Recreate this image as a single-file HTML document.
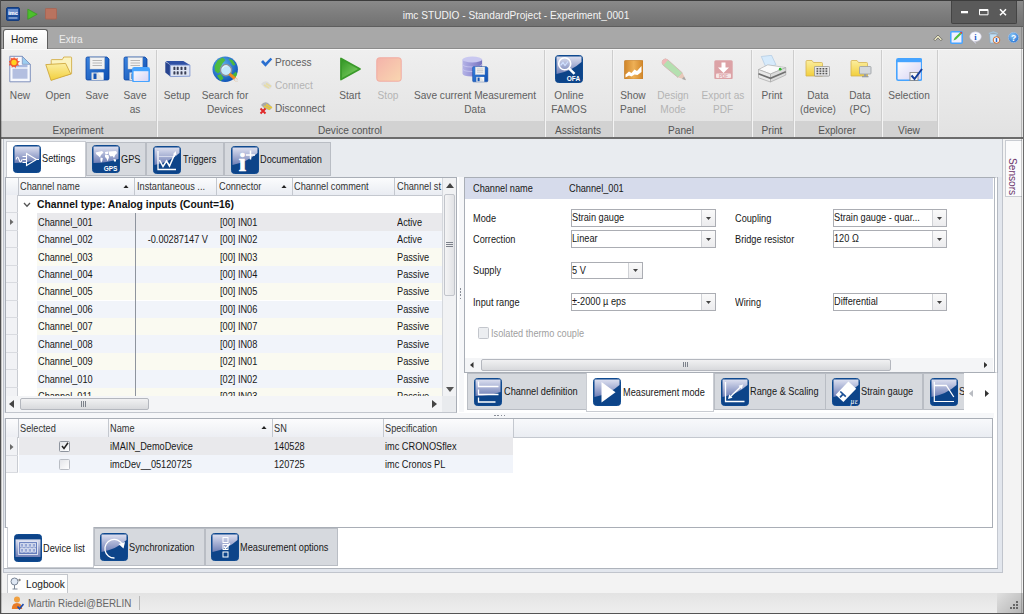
<!DOCTYPE html><html><head><meta charset="utf-8"><title>imc STUDIO - StandardProject - Experiment_0001</title><style>
html,body{margin:0;padding:0}
body{width:1024px;height:614px;overflow:hidden;position:relative;background:#f3f3f3;font-family:"Liberation Sans",sans-serif}
#w{position:absolute;left:0;top:0;width:1024px;height:614px;overflow:hidden}
#w div,#w svg{position:absolute;box-sizing:border-box}
.t{position:absolute;white-space:nowrap;line-height:20px;height:20px;color:#1a1a1a}
.g{font-size:10.4px;transform:scaleX(.885);color:#181818}
.gb{font-size:10.4px;font-weight:bold;transform:scaleX(.995);color:#111}
.r{font-size:11.5px;transform:scaleX(.88);color:#606060}
.rd{font-size:11.5px;transform:scaleX(.88);color:#b4b4b4}
.ti{font-size:11.5px;transform:scaleX(.88);color:#f4f4f4}
</style></head><body><div id="w">
<div style="left:0px;top:0px;width:1024px;height:27px;background:linear-gradient(#8b8b8b,#7d7d7d 50%,#717171)"></div>
<div style="left:0px;top:0px;width:1024px;height:1px;background:#3c3c3c"></div>
<div style="left:0px;top:26px;width:1024px;height:1px;background:#5e5e5e"></div>
<div style="left:0px;top:27px;width:1024px;height:22px;background:#a8a8a8"></div>
<div style="left:0px;top:48px;width:1024px;height:1px;background:#8c8c8c"></div>
<div style="left:950.5px;top:1px;width:66px;height:23px;background:#5a5a5a;border:1px solid #444;border-top:none;border-radius:0 0 2px 2px"></div>
<svg style="left:950px;top:0" width="66" height="24" viewBox="0 0 66 24"><rect x="11" y="11" width="7" height="2.300" fill="#fff"/><path d="M29.500 9.500h8.500v5.300h-8.500z" fill="none" stroke="#fff" stroke-width="1"/><rect x="29.500" y="9.200" width="8.500" height="1.800" fill="#fff"/><path d="M50 9.300l6 6M56 9.300l-6 6" stroke="#fff" stroke-width="1.500"/></svg>
<span class="t ti" style="top:4.5px;left:366px;width:300px;text-align:center;transform-origin:50% 50%;">imc STUDIO - StandardProject - Experiment_0001</span>
<div style="left:3px;top:29px;width:45px;height:21px;background:linear-gradient(#fff,#f1f1f1);border:1px solid #5e5e5e;border-bottom:none;border-radius:3px 3px 0 0"></div>
<span class="t r" style="top:29px;left:11px;transform-origin:0 50%;color:#222;">Home</span>
<span class="t r" style="top:29px;left:58.5px;transform-origin:0 50%;color:#ececec;">Extra</span>
<div style="left:0px;top:49px;width:1024px;height:89px;background:linear-gradient(#efefef,#e2e2e2);border-top:1px solid #fafafa"></div>
<div style="left:0px;top:121px;width:937px;height:17px;background:#d2d2d2"></div>
<div style="left:0px;top:137.4px;width:1024px;height:1.3px;background:#6c6c6c"></div>
<div style="left:0px;top:138.5px;width:1024px;height:1px;background:rgba(120,120,120,.25)"></div>
<div style="left:156px;top:50px;width:1px;height:87px;background:#cdcdcd"></div>
<div style="left:157px;top:50px;width:1px;height:87px;background:#f4f4f4"></div>
<div style="left:544px;top:50px;width:1px;height:87px;background:#cdcdcd"></div>
<div style="left:545px;top:50px;width:1px;height:87px;background:#f4f4f4"></div>
<div style="left:612px;top:50px;width:1px;height:87px;background:#cdcdcd"></div>
<div style="left:613px;top:50px;width:1px;height:87px;background:#f4f4f4"></div>
<div style="left:751px;top:50px;width:1px;height:87px;background:#cdcdcd"></div>
<div style="left:752px;top:50px;width:1px;height:87px;background:#f4f4f4"></div>
<div style="left:793px;top:50px;width:1px;height:87px;background:#cdcdcd"></div>
<div style="left:794px;top:50px;width:1px;height:87px;background:#f4f4f4"></div>
<div style="left:881px;top:50px;width:1px;height:87px;background:#cdcdcd"></div>
<div style="left:882px;top:50px;width:1px;height:87px;background:#f4f4f4"></div>
<div style="left:937px;top:50px;width:1px;height:87px;background:#cdcdcd"></div>
<div style="left:938px;top:50px;width:1px;height:87px;background:#f4f4f4"></div>
<span class="t r" style="top:119.5px;left:-72px;width:300px;text-align:center;transform-origin:50% 50%;color:#555;">Experiment</span>
<span class="t r" style="top:119.5px;left:200px;width:300px;text-align:center;transform-origin:50% 50%;color:#555;">Device control</span>
<span class="t r" style="top:119.5px;left:428px;width:300px;text-align:center;transform-origin:50% 50%;color:#555;">Assistants</span>
<span class="t r" style="top:119.5px;left:531px;width:300px;text-align:center;transform-origin:50% 50%;color:#555;">Panel</span>
<span class="t r" style="top:119.5px;left:622px;width:300px;text-align:center;transform-origin:50% 50%;color:#555;">Print</span>
<span class="t r" style="top:119.5px;left:687px;width:300px;text-align:center;transform-origin:50% 50%;color:#555;">Explorer</span>
<span class="t r" style="top:119.5px;left:759px;width:300px;text-align:center;transform-origin:50% 50%;color:#555;">View</span>
<span class="t r" style="top:85px;left:-130px;width:300px;text-align:center;transform-origin:50% 50%;">New</span>
<span class="t r" style="top:85px;left:-92px;width:300px;text-align:center;transform-origin:50% 50%;">Open</span>
<span class="t r" style="top:85px;left:-53.5px;width:300px;text-align:center;transform-origin:50% 50%;">Save</span>
<span class="t r" style="top:85px;left:-15px;width:300px;text-align:center;transform-origin:50% 50%;">Save</span>
<span class="t r" style="top:99px;left:-15px;width:300px;text-align:center;transform-origin:50% 50%;">as</span>
<span class="t r" style="top:85px;left:27px;width:300px;text-align:center;transform-origin:50% 50%;">Setup</span>
<span class="t r" style="top:85px;left:75px;width:300px;text-align:center;transform-origin:50% 50%;">Search for</span>
<span class="t r" style="top:99px;left:75px;width:300px;text-align:center;transform-origin:50% 50%;">Devices</span>
<span class="t r" style="top:85px;left:200px;width:300px;text-align:center;transform-origin:50% 50%;">Start</span>
<span class="t rd" style="top:85px;left:238px;width:300px;text-align:center;transform-origin:50% 50%;">Stop</span>
<span class="t r" style="top:85px;left:325px;width:300px;text-align:center;transform-origin:50% 50%;">Save current Measurement</span>
<span class="t r" style="top:99px;left:325px;width:300px;text-align:center;transform-origin:50% 50%;">Data</span>
<span class="t r" style="top:85px;left:418.5px;width:300px;text-align:center;transform-origin:50% 50%;">Online</span>
<span class="t r" style="top:99px;left:418.5px;width:300px;text-align:center;transform-origin:50% 50%;">FAMOS</span>
<span class="t r" style="top:85px;left:482.5px;width:300px;text-align:center;transform-origin:50% 50%;">Show</span>
<span class="t r" style="top:99px;left:482.5px;width:300px;text-align:center;transform-origin:50% 50%;">Panel</span>
<span class="t rd" style="top:85px;left:523px;width:300px;text-align:center;transform-origin:50% 50%;">Design</span>
<span class="t rd" style="top:99px;left:523px;width:300px;text-align:center;transform-origin:50% 50%;">Mode</span>
<span class="t rd" style="top:85px;left:572.5px;width:300px;text-align:center;transform-origin:50% 50%;">Export as</span>
<span class="t rd" style="top:99px;left:572.5px;width:300px;text-align:center;transform-origin:50% 50%;">PDF</span>
<span class="t r" style="top:85px;left:622px;width:300px;text-align:center;transform-origin:50% 50%;">Print</span>
<span class="t r" style="top:85px;left:667.5px;width:300px;text-align:center;transform-origin:50% 50%;">Data</span>
<span class="t r" style="top:99px;left:667.5px;width:300px;text-align:center;transform-origin:50% 50%;">(device)</span>
<span class="t r" style="top:85px;left:709.5px;width:300px;text-align:center;transform-origin:50% 50%;">Data</span>
<span class="t r" style="top:99px;left:709.5px;width:300px;text-align:center;transform-origin:50% 50%;">(PC)</span>
<span class="t r" style="top:85px;left:758.5px;width:300px;text-align:center;transform-origin:50% 50%;">Selection</span>
<span class="t r" style="top:52px;left:275px;transform-origin:0 50%;">Process</span>
<span class="t rd" style="top:75px;left:275px;transform-origin:0 50%;">Connect</span>
<span class="t r" style="top:97.5px;left:275px;transform-origin:0 50%;">Disconnect</span>
<div style="left:0px;top:139px;width:1024px;height:454px;background:#f3f3f3"></div>
<div style="left:2.5px;top:139px;width:1000.5px;height:434px;background:#e2e6ed;border:1px solid #c0c4cc;border-top:none"></div>
<div style="left:3.5px;top:139px;width:998.5px;height:37.5px;background:#e9ecf0"></div>
<div style="left:4.5px;top:176.5px;width:993px;height:392.5px;background:#fff;border-right:1px solid #c4c8d0;border-bottom:1px solid #c4c8d0"></div>
<div style="left:5.5px;top:141px;width:80px;height:36px;background:#fff;border:1px solid #c9ccd2;border-bottom:none"></div>
<div style="left:85.5px;top:142px;width:60px;height:34px;background:#d6d9de;border:1px solid #b9bdc4"></div>
<div style="left:146px;top:142px;width:77.5px;height:34px;background:#d6d9de;border:1px solid #b9bdc4"></div>
<div style="left:224px;top:142px;width:107px;height:34px;background:#d6d9de;border:1px solid #b9bdc4"></div>
<span class="t g" style="top:149.1px;left:42.2px;transform-origin:0 50%;">Settings</span>
<span class="t g" style="top:149.6px;left:121.2px;transform-origin:0 50%;">GPS</span>
<span class="t g" style="top:149.6px;left:182.7px;transform-origin:0 50%;">Triggers</span>
<span class="t g" style="top:149.6px;left:260.2px;transform-origin:0 50%;">Documentation</span>
<div style="left:5px;top:176.5px;width:452px;height:236px;background:#fff;border:1px solid #a9aeb6;border-bottom-color:#c2c6cd"></div>
<div style="left:6px;top:177.5px;width:437px;height:18.5px;background:linear-gradient(#fbfcfd,#e9ecf2);border-bottom:1px solid #c4c8cf"></div>
<div style="left:17.5px;top:178px;width:1px;height:17px;background:#c4c8cf"></div>
<div style="left:134px;top:178px;width:1px;height:17px;background:#c4c8cf"></div>
<div style="left:216px;top:178px;width:1px;height:17px;background:#c4c8cf"></div>
<div style="left:292px;top:178px;width:1px;height:17px;background:#c4c8cf"></div>
<div style="left:394px;top:178px;width:1px;height:17px;background:#c4c8cf"></div>
<span class="t g" style="top:177.1px;left:19.7px;transform-origin:0 50%;color:#333;">Channel name</span>
<span class="t g" style="top:177.1px;left:137.2px;transform-origin:0 50%;color:#333;">Instantaneous ...</span>
<span class="t g" style="top:177.1px;left:219.2px;transform-origin:0 50%;color:#333;">Connector</span>
<span class="t g" style="top:177.1px;left:294.2px;transform-origin:0 50%;color:#333;">Channel comment</span>
<span class="t g" style="top:177.1px;left:396.7px;transform-origin:0 50%;color:#333;">Channel st</span>
<svg style="left:123px;top:184.5px" width="6" height="3.500" viewBox="0 0 6 3.500"><path d="M0 3.500L3 0L6 3.500z" fill="#222"/></svg>
<svg style="left:281px;top:184.5px" width="6" height="3.500" viewBox="0 0 6 3.500"><path d="M0 3.500L3 0L6 3.500z" fill="#222"/></svg>
<div style="left:6px;top:195px;width:12px;height:201px;background:#f1f2f5;border-right:1px solid #c9ccd2"></div>
<svg style="left:23px;top:202px" width="8" height="6" viewBox="0 0 8 6"><path d="M1 1l3 3.200L7 1" fill="none" stroke="#555" stroke-width="1.300"/></svg>
<span class="t gb" style="top:195.1px;left:37.2px;transform-origin:0 50%;">Channel type: Analog inputs (Count=16)</span>
<div style="left:6px;top:195px;width:437px;height:201.500px;overflow:hidden">
<div style="left:30.5px;top:18.30000000000001px;width:406px;height:17.44px;background:#e9e9ec"></div>
<div style="left:0px;top:34.74000000000001px;width:12px;height:1px;background:#d9dbe0"></div>
<span class="t g" style="top:17.62px;left:32.2px;transform-origin:0 50%;">Channel_001</span>
<span class="t g" style="top:17.62px;left:214.2px;transform-origin:0 50%;">[00] IN01</span>
<span class="t g" style="top:17.62px;left:390.7px;transform-origin:0 50%;">Active</span>
<div style="left:30.5px;top:35.74000000000001px;width:406px;height:17.44px;background:#f1f4fa"></div>
<div style="left:0px;top:52.18000000000001px;width:12px;height:1px;background:#d9dbe0"></div>
<span class="t g" style="top:35.06px;left:32.2px;transform-origin:0 50%;">Channel_002</span>
<span class="t g" style="top:35.06px;left:-98.5px;width:300px;text-align:right;transform-origin:100% 50%;">-0.00287147 V</span>
<span class="t g" style="top:35.06px;left:214.2px;transform-origin:0 50%;">[00] IN02</span>
<span class="t g" style="top:35.06px;left:390.7px;transform-origin:0 50%;">Active</span>
<div style="left:30.5px;top:53.18000000000001px;width:406px;height:17.44px;background:#fafaf1"></div>
<div style="left:0px;top:69.62px;width:12px;height:1px;background:#d9dbe0"></div>
<span class="t g" style="top:52.5px;left:32.2px;transform-origin:0 50%;">Channel_003</span>
<span class="t g" style="top:52.5px;left:214.2px;transform-origin:0 50%;">[00] IN03</span>
<span class="t g" style="top:52.5px;left:390.7px;transform-origin:0 50%;">Passive</span>
<div style="left:30.5px;top:70.62px;width:406px;height:17.44px;background:#f1f4fa"></div>
<div style="left:0px;top:87.06px;width:12px;height:1px;background:#d9dbe0"></div>
<span class="t g" style="top:69.94px;left:32.2px;transform-origin:0 50%;">Channel_004</span>
<span class="t g" style="top:69.94px;left:214.2px;transform-origin:0 50%;">[00] IN04</span>
<span class="t g" style="top:69.94px;left:390.7px;transform-origin:0 50%;">Passive</span>
<div style="left:30.5px;top:88.06px;width:406px;height:17.44px;background:#fafaf1"></div>
<div style="left:0px;top:104.5px;width:12px;height:1px;background:#d9dbe0"></div>
<span class="t g" style="top:87.38px;left:32.2px;transform-origin:0 50%;">Channel_005</span>
<span class="t g" style="top:87.38px;left:214.2px;transform-origin:0 50%;">[00] IN05</span>
<span class="t g" style="top:87.38px;left:390.7px;transform-origin:0 50%;">Passive</span>
<div style="left:30.5px;top:105.5px;width:406px;height:17.44px;background:#f1f4fa"></div>
<div style="left:0px;top:121.94px;width:12px;height:1px;background:#d9dbe0"></div>
<span class="t g" style="top:104.82px;left:32.2px;transform-origin:0 50%;">Channel_006</span>
<span class="t g" style="top:104.82px;left:214.2px;transform-origin:0 50%;">[00] IN06</span>
<span class="t g" style="top:104.82px;left:390.7px;transform-origin:0 50%;">Passive</span>
<div style="left:30.5px;top:122.94000000000005px;width:406px;height:17.44px;background:#fafaf1"></div>
<div style="left:0px;top:139.38000000000005px;width:12px;height:1px;background:#d9dbe0"></div>
<span class="t g" style="top:122.26px;left:32.2px;transform-origin:0 50%;">Channel_007</span>
<span class="t g" style="top:122.26px;left:214.2px;transform-origin:0 50%;">[00] IN07</span>
<span class="t g" style="top:122.26px;left:390.7px;transform-origin:0 50%;">Passive</span>
<div style="left:30.5px;top:140.38px;width:406px;height:17.44px;background:#f1f4fa"></div>
<div style="left:0px;top:156.82px;width:12px;height:1px;background:#d9dbe0"></div>
<span class="t g" style="top:139.7px;left:32.2px;transform-origin:0 50%;">Channel_008</span>
<span class="t g" style="top:139.7px;left:214.2px;transform-origin:0 50%;">[00] IN08</span>
<span class="t g" style="top:139.7px;left:390.7px;transform-origin:0 50%;">Passive</span>
<div style="left:30.5px;top:157.82000000000005px;width:406px;height:17.44px;background:#fafaf1"></div>
<div style="left:0px;top:174.26000000000005px;width:12px;height:1px;background:#d9dbe0"></div>
<span class="t g" style="top:157.14px;left:32.2px;transform-origin:0 50%;">Channel_009</span>
<span class="t g" style="top:157.14px;left:214.2px;transform-origin:0 50%;">[02] IN01</span>
<span class="t g" style="top:157.14px;left:390.7px;transform-origin:0 50%;">Passive</span>
<div style="left:30.5px;top:175.26px;width:406px;height:17.44px;background:#f1f4fa"></div>
<div style="left:0px;top:191.7px;width:12px;height:1px;background:#d9dbe0"></div>
<span class="t g" style="top:174.58px;left:32.2px;transform-origin:0 50%;">Channel_010</span>
<span class="t g" style="top:174.58px;left:214.2px;transform-origin:0 50%;">[02] IN02</span>
<span class="t g" style="top:174.58px;left:390.7px;transform-origin:0 50%;">Passive</span>
<div style="left:30.5px;top:192.70000000000005px;width:406px;height:17.44px;background:#fafaf1"></div>
<div style="left:0px;top:209.14000000000004px;width:12px;height:1px;background:#d9dbe0"></div>
<span class="t g" style="top:192.02px;left:32.2px;transform-origin:0 50%;">Channel_011</span>
<span class="t g" style="top:192.02px;left:214.2px;transform-origin:0 50%;">[02] IN03</span>
<span class="t g" style="top:192.02px;left:390.7px;transform-origin:0 50%;">Passive</span>
<div style="left:0px;top:17px;width:12px;height:1px;background:#d9dbe0"></div>
</div>
<div style="left:134.5px;top:213px;width:1.5px;height:183px;background:#8e949e"></div>
<svg style="left:9.500px;top:219px" width="4" height="6" viewBox="0 0 4 6"><path d="M0 0L3.500 3L0 6z" fill="#6a6a6a"/></svg>
<div style="left:442px;top:177.5px;width:14px;height:218.5px;background:#f1f2f4;border-left:1px solid #d5d8dd"></div>
<div style="left:443.5px;top:193.5px;width:11.5px;height:102.5px;background:linear-gradient(90deg,#f4f4f5,#e2e3e6);border:1px solid #c2c5cb;border-radius:2px"></div>
<svg style="left:446px;top:183px" width="8" height="5" viewBox="0 0 8 5"><path d="M0 5L4 0L8 5z" fill="#444"/></svg>
<svg style="left:445.500px;top:387px" width="8" height="5" viewBox="0 0 8 5"><path d="M0 0L4 5L8 0z" fill="#555"/></svg>
<div style="left:446px;top:242px;width:7px;height:1px;background:#7d828b"></div>
<div style="left:446px;top:244px;width:7px;height:1px;background:#7d828b"></div>
<div style="left:446px;top:246px;width:7px;height:1px;background:#7d828b"></div>
<div style="left:6px;top:396px;width:450px;height:15.5px;background:#f4f5f7"></div>
<div style="left:19.5px;top:398px;width:129.5px;height:11.5px;background:linear-gradient(#f1f1f2,#d8d9dc);border:1px solid #b4b7be;border-radius:2px"></div>
<div style="left:81px;top:401px;width:1px;height:6px;background:#7d828b"></div>
<div style="left:83px;top:401px;width:1px;height:6px;background:#7d828b"></div>
<div style="left:85px;top:401px;width:1px;height:6px;background:#7d828b"></div>
<svg style="left:9px;top:400px" width="5" height="8" viewBox="0 0 5 8"><path d="M5 0L0 4L5 8z" fill="#444"/></svg>
<svg style="left:432px;top:400px" width="5" height="8" viewBox="0 0 5 8"><path d="M0 0L5 4L0 8z" fill="#444"/></svg>
<div style="left:442px;top:396px;width:14px;height:15.5px;background:#e9ebee"></div>
<div style="left:458.5px;top:177px;width:5px;height:235px;background:#f6f7f9"></div>
<div style="left:459.5px;top:288.0px;width:1.5px;height:1.5px;background:#8a8f98"></div>
<div style="left:459.5px;top:291.2px;width:1.5px;height:1.5px;background:#8a8f98"></div>
<div style="left:459.5px;top:294.4px;width:1.5px;height:1.5px;background:#8a8f98"></div>
<div style="left:459.5px;top:297.6px;width:1.5px;height:1.5px;background:#8a8f98"></div>
<div style="left:463.5px;top:176.5px;width:534px;height:196px;background:#fff;border:1px solid #a9aeb6;border-right:4px double #b4b9c1"></div>
<div style="left:464.5px;top:177.5px;width:528px;height:21px;background:#d6dbeb"></div>
<span class="t g" style="top:178.6px;left:473.2px;transform-origin:0 50%;">Channel name</span>
<span class="t g" style="top:178.6px;left:569.2px;transform-origin:0 50%;">Channel_001</span>
<span class="t g" style="top:208.6px;left:473.2px;transform-origin:0 50%;">Mode</span>
<span class="t g" style="top:229.6px;left:473.2px;transform-origin:0 50%;">Correction</span>
<span class="t g" style="top:261.1px;left:473.2px;transform-origin:0 50%;">Supply</span>
<span class="t g" style="top:292.6px;left:473.2px;transform-origin:0 50%;">Input range</span>
<span class="t g" style="top:208.6px;left:735.2px;transform-origin:0 50%;">Coupling</span>
<span class="t g" style="top:229.6px;left:735.2px;transform-origin:0 50%;">Bridge resistor</span>
<span class="t g" style="top:292.6px;left:735.2px;transform-origin:0 50%;">Wiring</span>
<div style="left:570.5px;top:209px;width:145px;height:17.5px;background:#fff;border:1px solid #abadb3"></div>
<div style="left:701.0px;top:210px;width:13.5px;height:15.5px;background:linear-gradient(#fafafa,#ececee);border-left:1px solid #d0d2d6"></div>
<svg style="left:705.5px;top:216.75px" width="5" height="3" viewBox="0 0 5 3"><path d="M0 0L2.500 3L5 0z" fill="#444"/></svg>
<span class="t g" style="top:208.35px;left:571.7px;transform-origin:0 50%;">Strain gauge</span>
<div style="left:570.5px;top:230px;width:145px;height:17.5px;background:#fff;border:1px solid #abadb3"></div>
<div style="left:701.0px;top:231px;width:13.5px;height:15.5px;background:linear-gradient(#fafafa,#ececee);border-left:1px solid #d0d2d6"></div>
<svg style="left:705.5px;top:237.75px" width="5" height="3" viewBox="0 0 5 3"><path d="M0 0L2.500 3L5 0z" fill="#444"/></svg>
<span class="t g" style="top:229.35px;left:571.7px;transform-origin:0 50%;">Linear</span>
<div style="left:570.5px;top:261.5px;width:72px;height:17.5px;background:#fff;border:1px solid #abadb3"></div>
<div style="left:628.0px;top:262.5px;width:13.5px;height:15.5px;background:linear-gradient(#fafafa,#ececee);border-left:1px solid #d0d2d6"></div>
<svg style="left:632.5px;top:269.25px" width="5" height="3" viewBox="0 0 5 3"><path d="M0 0L2.500 3L5 0z" fill="#444"/></svg>
<span class="t g" style="top:260.85px;left:571.7px;transform-origin:0 50%;">5 V</span>
<div style="left:570.5px;top:293px;width:145px;height:17.5px;background:#fff;border:1px solid #abadb3"></div>
<div style="left:701.0px;top:294px;width:13.5px;height:15.5px;background:linear-gradient(#fafafa,#ececee);border-left:1px solid #d0d2d6"></div>
<svg style="left:705.5px;top:300.75px" width="5" height="3" viewBox="0 0 5 3"><path d="M0 0L2.500 3L5 0z" fill="#444"/></svg>
<span class="t g" style="top:292.35px;left:571.7px;transform-origin:0 50%;">±-2000 µ eps</span>
<div style="left:832.5px;top:209px;width:114px;height:17.5px;background:#fff;border:1px solid #abadb3"></div>
<div style="left:932.0px;top:210px;width:13.5px;height:15.5px;background:linear-gradient(#fafafa,#ececee);border-left:1px solid #d0d2d6"></div>
<svg style="left:936.5px;top:216.75px" width="5" height="3" viewBox="0 0 5 3"><path d="M0 0L2.500 3L5 0z" fill="#444"/></svg>
<span class="t g" style="top:208.35px;left:833.7px;transform-origin:0 50%;">Strain gauge - quar...</span>
<div style="left:832.5px;top:230px;width:114px;height:17.5px;background:#fff;border:1px solid #abadb3"></div>
<div style="left:932.0px;top:231px;width:13.5px;height:15.5px;background:linear-gradient(#fafafa,#ececee);border-left:1px solid #d0d2d6"></div>
<svg style="left:936.5px;top:237.75px" width="5" height="3" viewBox="0 0 5 3"><path d="M0 0L2.500 3L5 0z" fill="#444"/></svg>
<span class="t g" style="top:229.35px;left:833.7px;transform-origin:0 50%;">120 Ω</span>
<div style="left:832.5px;top:293px;width:114px;height:17.5px;background:#fff;border:1px solid #abadb3"></div>
<div style="left:932.0px;top:294px;width:13.5px;height:15.5px;background:linear-gradient(#fafafa,#ececee);border-left:1px solid #d0d2d6"></div>
<svg style="left:936.5px;top:300.75px" width="5" height="3" viewBox="0 0 5 3"><path d="M0 0L2.500 3L5 0z" fill="#444"/></svg>
<span class="t g" style="top:292.35px;left:833.7px;transform-origin:0 50%;">Differential</span>
<div style="left:477.5px;top:327px;width:11.5px;height:11.5px;background:#eceef1;border:1px solid #c3c6cc;border-radius:1.500px"></div>
<span class="t g" style="top:323.6px;left:491.2px;transform-origin:0 50%;color:#a0a0a0;">Isolated thermo couple</span>
<div style="left:464.5px;top:358px;width:528px;height:13.5px;background:#f4f5f7"></div>
<div style="left:480.5px;top:359px;width:410px;height:11.5px;background:linear-gradient(#f1f1f2,#d8d9dc);border:1px solid #b4b7be;border-radius:2px"></div>
<div style="left:683px;top:362px;width:1px;height:5px;background:#7d828b"></div>
<div style="left:685px;top:362px;width:1px;height:5px;background:#7d828b"></div>
<div style="left:687px;top:362px;width:1px;height:5px;background:#7d828b"></div>
<svg style="left:470px;top:362px" width="3.500" height="6" viewBox="0 0 3.500 6"><path d="M3.500 0L0 3L3.500 6z" fill="#333"/></svg>
<svg style="left:983.500px;top:362px" width="3.500" height="6" viewBox="0 0 3.500 6"><path d="M0 0L3.500 3L0 6z" fill="#333"/></svg>
<div style="left:467px;top:372.5px;width:119.5px;height:37.5px;background:#d6d9de;border:1px solid #b9bdc4"></div>
<div style="left:586px;top:372.5px;width:127.5px;height:39px;background:#fff;border:1px solid #c9ccd2;border-top:none"></div>
<div style="left:713.5px;top:372.5px;width:112px;height:37.5px;background:#d6d9de;border:1px solid #b9bdc4"></div>
<div style="left:825px;top:372.5px;width:98px;height:37.5px;background:#d6d9de;border:1px solid #b9bdc4"></div>
<div style="left:922.5px;top:372.5px;width:41.5px;height:37.5px;background:#d6d9de;border:1px solid #b9bdc4;border-right:none"></div>
<span class="t g" style="top:381.6px;left:503.7px;transform-origin:0 50%;">Channel definition</span>
<span class="t g" style="top:382.6px;left:622.7px;transform-origin:0 50%;">Measurement mode</span>
<span class="t g" style="top:381.6px;left:749.7px;transform-origin:0 50%;">Range &amp; Scaling</span>
<span class="t g" style="top:381.6px;left:861.2px;transform-origin:0 50%;">Strain gauge</span>
<div style="left:959px;top:381px;width:5px;height:20px;overflow:hidden">
<span class="t g" style="top:0.6px;left:-0.3px;transform-origin:0 50%;">S</span>
</div>
<svg style="left:968.500px;top:390px" width="4" height="7" viewBox="0 0 4 7"><path d="M4 0L0 3.500L4 7z" fill="#b9bcc2"/></svg>
<svg style="left:984.500px;top:390px" width="4" height="7" viewBox="0 0 4 7"><path d="M0 0L4 3.500L0 7z" fill="#333"/></svg>
<div style="left:4px;top:412.5px;width:990px;height:5px;background:#f6f7f9"></div>
<div style="left:494.0px;top:414.5px;width:1.5px;height:1.5px;background:#8a8f98"></div>
<div style="left:497.3px;top:414.5px;width:1.5px;height:1.5px;background:#8a8f98"></div>
<div style="left:500.6px;top:414.5px;width:1.5px;height:1.5px;background:#8a8f98"></div>
<div style="left:503.9px;top:414.5px;width:1.5px;height:1.5px;background:#8a8f98"></div>
<div style="left:5px;top:417.5px;width:988px;height:110px;background:#fff;border:1px solid #a9aeb6"></div>
<div style="left:6px;top:418.5px;width:986px;height:19px;background:linear-gradient(#f8f9fb,#eaedf2);border-bottom:1px solid #c4c8cf"></div>
<div style="left:6px;top:418.5px;width:507px;height:19px;background:linear-gradient(#fcfcfd,#eceef3);border-bottom:1px solid #c4c8cf"></div>
<div style="left:18px;top:418.5px;width:1px;height:18px;background:#c4c8cf"></div>
<div style="left:108px;top:418.5px;width:1px;height:18px;background:#c4c8cf"></div>
<div style="left:272px;top:418.5px;width:1px;height:18px;background:#c4c8cf"></div>
<div style="left:383px;top:418.5px;width:1px;height:18px;background:#c4c8cf"></div>
<div style="left:513px;top:418.5px;width:1px;height:18px;background:#c4c8cf"></div>
<span class="t g" style="top:418.9px;left:20.2px;transform-origin:0 50%;color:#333;">Selected</span>
<span class="t g" style="top:418.9px;left:110.2px;transform-origin:0 50%;color:#333;">Name</span>
<span class="t g" style="top:418.9px;left:274.2px;transform-origin:0 50%;color:#333;">SN</span>
<span class="t g" style="top:418.9px;left:385.2px;transform-origin:0 50%;color:#333;">Specification</span>
<svg style="left:261px;top:425.5px" width="6" height="3.500" viewBox="0 0 6 3.500"><path d="M0 3.500L3 0L6 3.500z" fill="#222"/></svg>
<div style="left:6px;top:437px;width:12px;height:36px;background:#f1f2f5;border-right:1px solid #c9ccd2"></div>
<div style="left:6px;top:454.5px;width:12px;height:1px;background:#d9dbe0"></div>
<div style="left:6px;top:472px;width:12px;height:1px;background:#d9dbe0"></div>
<div style="left:19px;top:437px;width:494px;height:18px;background:#e9e9ec"></div>
<div style="left:19px;top:455px;width:494px;height:17.5px;background:#f1f4fa"></div>
<svg style="left:10px;top:443.500px" width="4" height="6" viewBox="0 0 4 6"><path d="M0 0L3.500 3L0 6z" fill="#6a6a6a"/></svg>
<div style="left:59px;top:440.5px;width:11px;height:11px;background:linear-gradient(135deg,#dfe2e6,#fff);border:1px solid #8e949e;border-radius:1.500px"></div>
<svg style="left:60.500px;top:442px" width="8" height="8" viewBox="0 0 8 8"><path d="M1 4l2 2.500L7 .8" fill="none" stroke="#222" stroke-width="1.500"/></svg>
<div style="left:59px;top:458.5px;width:11px;height:11px;background:linear-gradient(135deg,#e3e5e9,#fff);border:1px solid #b9bdc4;border-radius:1.500px"></div>
<span class="t g" style="top:437.1px;left:110.2px;transform-origin:0 50%;">iMAIN_DemoDevice</span>
<span class="t g" style="top:437.1px;left:274.2px;transform-origin:0 50%;">140528</span>
<span class="t g" style="top:437.1px;left:385.2px;transform-origin:0 50%;">imc CRONOSflex</span>
<span class="t g" style="top:454.6px;left:110.2px;transform-origin:0 50%;">imcDev__05120725</span>
<span class="t g" style="top:454.6px;left:274.2px;transform-origin:0 50%;">120725</span>
<span class="t g" style="top:454.6px;left:385.2px;transform-origin:0 50%;">imc Cronos PL</span>
<div style="left:4px;top:527.5px;width:993px;height:41px;background:#fff"></div>
<div style="left:6.5px;top:527px;width:87px;height:41px;background:#fff;border:1px solid #c9ccd2;border-top:none"></div>
<div style="left:93.5px;top:527.5px;width:111px;height:38.5px;background:#d6d9de;border:1px solid #b9bdc4"></div>
<div style="left:204.5px;top:527.5px;width:133px;height:38.5px;background:#d6d9de;border:1px solid #b9bdc4"></div>
<span class="t g" style="top:538.6px;left:43.2px;transform-origin:0 50%;">Device list</span>
<span class="t g" style="top:537.6px;left:129.2px;transform-origin:0 50%;">Synchronization</span>
<span class="t g" style="top:537.6px;left:240.2px;transform-origin:0 50%;">Measurement options</span>
<div style="left:4px;top:568px;width:994px;height:1px;background:#aeb3bb"></div>
<div style="left:1005px;top:140px;width:17px;height:56.5px;background:#fbfbfc;border:1px solid #c9ccd2;border-right:none"></div>
<span class="t g" style="left:1012.500px;top:141px;transform-origin:0 0;transform:rotate(90deg) translate(17px,-10px) scaleX(.92);color:#6b356b;font-size:11px">Sensors</span>
<div style="left:7px;top:574px;width:61px;height:19.5px;background:#fdfdfd;border:1px solid #c3c6cb;border-bottom:none"></div>
<span class="t r" style="top:574px;left:25.5px;transform-origin:0 50%;color:#222;">Logbook</span>
<div style="left:0px;top:592.5px;width:1024px;height:20px;background:linear-gradient(#e3e3e3,#eeeeee)"></div>
<span class="t r" style="top:593px;left:27.5px;transform-origin:0 50%;transform:scaleX(0.855);color:#666;">Martin Riedel@BERLIN</span>
<div style="left:139px;top:596px;width:1px;height:14px;background:#b8b8b8"></div>
<div style="left:997px;top:592.5px;width:25.5px;height:20px;background:linear-gradient(135deg,#e0e0e0,#b4b4b4)"></div>
<div style="left:1016px;top:607px;width:2px;height:2px;background:#666"></div>
<div style="left:1013px;top:607px;width:2px;height:2px;background:#666"></div>
<div style="left:1016px;top:604px;width:2px;height:2px;background:#666"></div>
<div style="left:1010px;top:607px;width:2px;height:2px;background:#666"></div>
<div style="left:1013px;top:604px;width:2px;height:2px;background:#666"></div>
<div style="left:1016px;top:601px;width:2px;height:2px;background:#666"></div>
<svg style="left:0;top:0" width="0" height="0"><defs>
<linearGradient id="gl" x1="0" y1="0" x2="0" y2="1"><stop offset="0" stop-color="#dde0f0"/><stop offset="1" stop-color="#6f7fb6"/></linearGradient>
<linearGradient id="fl" x1="0" y1="0" x2="1" y2="1"><stop offset="0" stop-color="#3b84e0"/><stop offset="1" stop-color="#0f4fb0"/></linearGradient>
<linearGradient id="fo" x1="0" y1="0" x2="0" y2="1"><stop offset="0" stop-color="#fbeea0"/><stop offset="1" stop-color="#f2cf3c"/></linearGradient>
<linearGradient id="gr" x1="0" y1="0" x2="1" y2="1"><stop offset="0" stop-color="#2f9422"/><stop offset="1" stop-color="#8ad86c"/></linearGradient>
<linearGradient id="st" x1="0" y1="0" x2="1" y2="1"><stop offset="0" stop-color="#f4b3aa"/><stop offset="1" stop-color="#f9d6b0"/></linearGradient>
<linearGradient id="wn" x1="0" y1="0" x2="1" y2="1"><stop offset="0" stop-color="#ffffff"/><stop offset="1" stop-color="#d6d2f4"/></linearGradient>
<radialGradient id="gb" cx=".4" cy=".35" r=".7"><stop offset="0" stop-color="#5fb4f0"/><stop offset="1" stop-color="#0a4fb4"/></radialGradient>
<linearGradient id="or" x1="0" y1="0" x2="1" y2="0"><stop offset="0" stop-color="#cf8428"/><stop offset=".5" stop-color="#eeb056"/><stop offset="1" stop-color="#cf8428"/></linearGradient>
<linearGradient id="cy" x1="0" y1="0" x2="1" y2="0"><stop offset="0" stop-color="#b4b3e6"/><stop offset=".5" stop-color="#9693d6"/><stop offset="1" stop-color="#7673bc"/></linearGradient>
<radialGradient id="hp" cx=".4" cy=".3" r=".8"><stop offset="0" stop-color="#8cc6f6"/><stop offset="1" stop-color="#1f6fd0"/></radialGradient>
</defs></svg>
<svg style="left:13px;top:145px" width="28" height="28" viewBox="0 0 28 28"><rect x=".500" y=".500" width="27" height="27" rx="3" fill="#0d4489" stroke="#0f4a90"/><path d="M1.500 1.500h25v12.500Q15 18 1.500 18z" fill="url(#gl)"/><path d="M3 14.500q1.500-5 3 0t3 0" stroke="#fff" fill="none" stroke-width="1.100"/><path d="M9.500 11.500h4M9.500 14.500h4M9.500 17.500h4" stroke="#fff" fill="none" stroke-width="1"/><path d="M13.500 8.500v12l10-6zM23.500 14.500h2.500" stroke="#fff" fill="none" stroke-width="1.100"/></svg>
<svg style="left:91.5px;top:145px" width="28" height="28" viewBox="0 0 28 28"><rect x=".500" y=".500" width="27" height="27" rx="3" fill="#0d4489" stroke="#0f4a90"/><path d="M1.500 1.500h25v12.500Q15 18 1.500 18z" fill="url(#gl)"/><path d="M3.500 7.500L10 6l1.500 1.500-2.500 2.500-1 2.500-1.500-1.500-2-1.500zM8.500 12.500l2.300.5-.5 3-1.300 1.800-.6-2.800zM13 7l3-.6v2.400l-2.500.9zM13 10h3.500l.5 2.500-1.500 3.700-1-2.700L13 12zM16.500 6.500L24 6l1.200 2-2 2-1.200 3-1.500-2-2 .5-1.500-2zM21.500 14l2.500.5v2h-2z" fill="#fff"/><text x="18.500" y="26" font-family="Liberation Sans,sans-serif" font-weight="bold" font-size="6.500" fill="#fff" text-anchor="middle">GPS</text></svg>
<svg style="left:153px;top:145.5px" width="28" height="28" viewBox="0 0 28 28"><rect x=".500" y=".500" width="27" height="27" rx="3" fill="#0d4489" stroke="#0f4a90"/><path d="M1.500 1.500h25v5.500Q17 16 1.500 19z" fill="url(#gl)"/><path d="M5 5v18.500h18" stroke="#fff" fill="none" stroke-width="1.300"/><path d="M5 10.500h17" stroke="#dfe3f2" stroke-width=".800" fill="none"/><path d="M6.500 14l3.500 6.500 3.500-5.500 3 5 5.500-12.500" stroke="#fff" fill="none" stroke-width="1.500"/><path d="M22.800 5l-2.800 3.200 3.400 1.300z" fill="#fff"/></svg>
<svg style="left:231px;top:145.5px" width="28" height="28" viewBox="0 0 28 28"><rect x=".500" y=".500" width="27" height="27" rx="3" fill="#0d4489" stroke="#0f4a90"/><path d="M1.500 1.500h25v5.500Q17 16 1.500 19z" fill="url(#gl)"/><text x="11.300" y="25" font-family="Liberation Serif,serif" font-weight="bold" font-size="26" fill="#fff" stroke="#fff" stroke-width=".700" text-anchor="middle">i</text><path d="M19.500 4.500v9M15 9h9" stroke="#fff" stroke-width="1.500"/></svg>
<svg style="left:14px;top:533.5px" width="28" height="28" viewBox="0 0 28 28"><rect x=".500" y=".500" width="27" height="27" rx="3" fill="#0d4489" stroke="#0f4a90"/><rect x="1.500" y="5.400" width="25" height="17.600" fill="url(#gl)"/><rect x="4.700" y="7.700" width="18.700" height="12.900" fill="#647cbc" stroke="#f4f5fb" stroke-width=".800"/><rect x="6.7" y="9.6" width="2.700" height="3.500" fill="#93a4d4" stroke="#f8f9fd" stroke-width=".700"/><rect x="10.7" y="9.6" width="2.700" height="3.500" fill="#93a4d4" stroke="#f8f9fd" stroke-width=".700"/><rect x="14.7" y="9.6" width="2.700" height="3.500" fill="#93a4d4" stroke="#f8f9fd" stroke-width=".700"/><rect x="18.7" y="9.6" width="2.700" height="3.500" fill="#93a4d4" stroke="#f8f9fd" stroke-width=".700"/><rect x="6.7" y="14.6" width="2.700" height="3.500" fill="#93a4d4" stroke="#f8f9fd" stroke-width=".700"/><rect x="10.7" y="14.6" width="2.700" height="3.500" fill="#93a4d4" stroke="#f8f9fd" stroke-width=".700"/><rect x="14.7" y="14.6" width="2.700" height="3.500" fill="#93a4d4" stroke="#f8f9fd" stroke-width=".700"/><rect x="18.7" y="14.6" width="2.700" height="3.500" fill="#93a4d4" stroke="#f8f9fd" stroke-width=".700"/></svg>
<svg style="left:100px;top:533px" width="28" height="28" viewBox="0 0 28 28"><rect x=".500" y=".500" width="27" height="27" rx="3" fill="#0d4489" stroke="#0f4a90"/><path d="M1.500 1.500h25v5.500Q17 16 1.500 19z" fill="url(#gl)"/><path d="M14.500 25A9.300 9.300 0 1 1 22.500 11.500" stroke="#fff" fill="none" stroke-width="1.300"/><path d="M18.500 11l6.500-2-1.500 6.500z" fill="#fff"/></svg>
<svg style="left:211px;top:533px" width="28" height="28" viewBox="0 0 28 28"><rect x=".500" y=".500" width="27" height="27" rx="3" fill="#0d4489" stroke="#0f4a90"/><path d="M1.500 1.500h25v5.500Q17 16 1.500 19z" fill="url(#gl)"/><rect x="12" y="4.500" width="5" height="5" stroke="#fff" fill="none" stroke-width="1"/><rect x="12" y="11.500" width="5" height="5" stroke="#fff" fill="none" stroke-width="1"/><rect x="12" y="19" width="5" height="5" stroke="#fff" fill="none" stroke-width="1"/><path d="M13 13.500l1.500 2 4.500-5" stroke="#fff" fill="none" stroke-width="1.300"/></svg>
<svg style="left:474px;top:377.5px" width="28" height="28" viewBox="0 0 28 28"><rect x=".500" y=".500" width="27" height="27" rx="3" fill="#0d4489" stroke="#0f4a90"/><path d="M1.500 1.500h25v12.500Q15 18 1.500 18z" fill="url(#gl)"/><path d="M4.500 3.500v5h20M4.500 11.500v5h20M4.500 19.500v4.500h17" stroke="#fff" fill="none" stroke-width="1.300"/></svg>
<svg style="left:593px;top:378px" width="28" height="28" viewBox="0 0 28 28"><rect x=".500" y=".500" width="27" height="27" rx="3" fill="#0d4489" stroke="#0f4a90"/><path d="M1.500 1.500h25v5.500Q17 16 1.500 19z" fill="url(#gl)"/><path d="M8.500 4v20.500l14-10.200z" fill="#fff"/></svg>
<svg style="left:720.5px;top:377.5px" width="28" height="28" viewBox="0 0 28 28"><rect x=".500" y=".500" width="27" height="27" rx="3" fill="#0d4489" stroke="#0f4a90"/><path d="M1.500 1.500h25v5.500Q17 16 1.500 19z" fill="url(#gl)"/><path d="M4.500 4v19.500h19" stroke="#fff" fill="none" stroke-width="1.300"/><path d="M9.500 18.500l10-9.500" stroke="#fff" fill="none" stroke-width="1.400"/><path d="M22 6.500l-4.500 1.200 3.300 3.300zM7 21l1.200-4.500 3.300 3.300z" fill="#fff"/></svg>
<svg style="left:832px;top:377.5px" width="28" height="28" viewBox="0 0 28 28"><rect x=".500" y=".500" width="27" height="27" rx="3" fill="#0d4489" stroke="#0f4a90"/><path d="M1.500 1.500h25v5.500Q17 16 1.500 19z" fill="url(#gl)"/><path d="M16.400 3.600L24.200 10.700 11.400 24.100 3.700 16.800z" fill="#fff"/><path d="M8.300 13.500l5.500 5.200M11 16.200l-3 3.200" stroke="#1a4f96" stroke-width="1.700" fill="none"/><text x="22" y="26" font-family="Liberation Serif,serif" font-style="italic" font-size="7.500" fill="#fff" text-anchor="middle">µε</text></svg>
<svg style="left:930px;top:377.5px" width="28" height="28" viewBox="0 0 28 28"><rect x=".500" y=".500" width="27" height="27" rx="3" fill="#0d4489" stroke="#0f4a90"/><path d="M1.500 1.500h25v5.500Q17 16 1.500 19z" fill="url(#gl)"/><path d="M4.300 3.800v19.700h19.700" stroke="#fff" fill="none" stroke-width="1.200"/><path d="M4.300 7.500h12l7.500 11.500" stroke="#fff" fill="none" stroke-width="1.300"/></svg>
<svg style="left:554.5px;top:54.5px" width="28" height="28" viewBox="0 0 28 28"><rect x=".500" y=".500" width="27" height="27" rx="3" fill="#0d4489" stroke="#0f4a90"/><path d="M1.500 1.500h25v5.500Q17 16 1.500 19z" fill="url(#gl)"/><circle cx="9.700" cy="8.800" r="6" stroke="#fff" fill="none" stroke-width="1.600"/><path d="M14 13.300l5.500 5.500" stroke="#fff" stroke-width="2.500"/><path d="M5.500 10.500l2.500-3 2 3 3-4" stroke="#cfe0ff" stroke-width="1.200" fill="none"/><text x="18.500" y="26" font-family="Liberation Sans,sans-serif" font-weight="bold" font-size="6.500" fill="#fff" text-anchor="middle">OFA</text></svg>
<svg style="left:6px;top:7px" width="14" height="14" viewBox="0 0 14 14"><rect x=".500" y=".500" width="13" height="13" rx="1.500" fill="#1d4f9c" stroke="#153c7c"/><rect x="2" y="2" width="10" height="6" fill="#6f92cc"/><text x="7" y="8" font-family="Liberation Sans,sans-serif" font-weight="bold" font-size="5.500" fill="#fff" text-anchor="middle">imc</text><path d="M2.500 11h9" stroke="#cfdcf2" stroke-width="1"/></svg>
<svg style="left:27px;top:7.5px" width="11" height="12.5" viewBox="0 0 11 12.5"><path d="M.800 1.200v10.100l9.400-5z" fill="#4cc02c" stroke="#3a9a22" stroke-width=".800" stroke-linejoin="round"/></svg>
<svg style="left:45px;top:8px" width="12" height="11.5" viewBox="0 0 12 11.5"><rect x=".400" y=".400" width="11.200" height="10.700" rx="1" fill="#b9735f" stroke="#a9624f" stroke-width=".800"/></svg>
<svg style="left:9px;top:55px" width="23" height="28" viewBox="0 0 23 28"><path d="M.800 1.300h12.500l8 8v17.500H.800z" fill="#f6f8fd" stroke="#7f91bd" stroke-width="1"/><path d="M13.300 1.300v8h8z" fill="#9ccdf0" stroke="#7f91bd" stroke-width=".800"/><rect x="3.500" y="10" width="15" height="2.300" fill="#a9b9e0"/><rect x="3.500" y="13.700" width="15" height="10" fill="#b3bfe0"/><path d="M5 1.500l1.200 2.800 2.800-1.500-.8 3 3 .8-2.700 1.500 1.700 2.700-3-.6L6.500 13.500 5 10.800 2.800 13l-.3-3.100L-.500 10.500l1.800-2.600L-1 6.200l3.100-.6L1.500 2.500l2.800 1.600z" fill="#f2502e" opacity=".9"/><circle cx="5" cy="7.500" r="4.400" fill="#f4562e" opacity=".85"/><circle cx="5" cy="7.500" r="2.700" fill="#ffd21e"/></svg>
<svg style="left:45px;top:55px" width="28" height="28" viewBox="0 0 28 28"><path d="M6.200 24.300V5.200q0-.6.600-.6h10.500l1.500-2.600h7q.8 0 .8.800V18.800z" fill="#fbf3c0" stroke="#d2ae4a" stroke-width=".900"/><path d="M.800 9.600L20.600 8.400 25.800 19 6 25.400z" fill="url(#fo)" stroke="#cfa83e" stroke-width=".900"/></svg>
<svg style="left:84.5px;top:56px" width="25" height="25" viewBox="0 0 25 25"><path d="M1 2.500Q1 1 2.500 1h19.500l2 2v19.500q0 1.500-1.500 1.500H2.500Q1 24 1 22.500z" fill="url(#fl)" stroke="#0b43a0" stroke-width=".800"/><rect x="5" y="1.500" width="14.500" height="11.500" fill="#f2f2f2" stroke="#c8c8c8" stroke-width=".500"/><path d="M7.500 4.500h9.500M7.500 7h9.500M7.500 9.500h9.500" stroke="#b8b8b8" stroke-width="1"/><rect x="6.500" y="16.500" width="12" height="7.500" fill="#e4e4e4"/><rect x="8.500" y="17.500" width="3" height="5.500" fill="#1554b4"/><path d="M13 16.500h5.500v7.500z" fill="#fff" opacity=".7"/></svg>
<svg style="left:122.5px;top:56px" width="25" height="25" viewBox="0 0 25 25"><path d="M1 2.500Q1 1 2.500 1h19.500l2 2v19.500q0 1.500-1.500 1.500H2.500Q1 24 1 22.500z" fill="url(#fl)" stroke="#0b43a0" stroke-width=".800"/><rect x="5" y="1.500" width="14.500" height="11.500" fill="#f2f2f2" stroke="#c8c8c8" stroke-width=".500"/><path d="M7.500 4.500h9.500M7.500 7h9.500M7.500 9.500h9.500" stroke="#b8b8b8" stroke-width="1"/><rect x="6.500" y="16.500" width="12" height="7.500" fill="#e4e4e4"/><rect x="8.500" y="17.500" width="3" height="5.500" fill="#1554b4"/><path d="M13 16.500h5.500v7.500z" fill="#fff" opacity=".7"/></svg>
<svg style="left:131.5px;top:66.5px" width="18" height="15.5" viewBox="0 0 18 15.5"><rect x=".800" y=".800" width="16.4" height="13.9" rx="1.500" fill="url(#wn)" stroke="#46a4ff" stroke-width="1.600"/><rect x="1" y="1" width="16" height="3.200" fill="#46a4ff"/></svg>
<svg style="left:164px;top:60px" width="28" height="18" viewBox="0 0 28 18"><path d="M1.700 1h17.700l6.500 4.100H6.300z" fill="#2f50a4"/><path d="M1.300 1.800l5 3.300v11.500l-5-4.100z" fill="#27448f"/><path d="M6.300 5.100h19.600v11.100l-19.600 .4z" fill="#dfe5f4" stroke="#7d94cf" stroke-width=".900"/><rect x="9.4" y="6.8" width="2" height="3.300" rx=".600" fill="#3a3f55"/><rect x="12.7" y="6.8" width="2" height="3.300" rx=".600" fill="#3a3f55"/><rect x="16.5" y="6.8" width="2" height="3.300" rx=".600" fill="#3a3f55"/><rect x="20.3" y="6.8" width="2" height="3.300" rx=".600" fill="#3a3f55"/><rect x="9.4" y="11.3" width="2" height="3.300" rx=".600" fill="#3a3f55"/><rect x="12.7" y="11.3" width="2" height="3.300" rx=".600" fill="#3a3f55"/><rect x="16.5" y="11.3" width="2" height="3.300" rx=".600" fill="#3a3f55"/><rect x="20.3" y="11.3" width="2" height="3.300" rx=".600" fill="#3a3f55"/></svg>
<svg style="left:212px;top:55.5px" width="28" height="28" viewBox="0 0 28 28"><circle cx="13.200" cy="13.300" r="12.700" fill="url(#gb)"/><path d="M2.500 10L5.500 4.500 10.500 1.500l3 2.500-3 3.500-2 4 1 3-3.500 3-3-2.500zM16.500 2.500l4.500 2 2.500 4.500-2.500 .5-2.500-3.500zM5 19.500l4-1.500 2.500 4.500-3 2.500zM20 19l4-3.500 1.200 3L22.500 23z" fill="#4fc02e" opacity=".9"/><circle cx="14" cy="14.100" r="5.600" fill="#c4e7fa" stroke="#8a929c" stroke-width="1.400"/><path d="M10.500 12.500a3.800 3.800 0 0 1 5-2.500" stroke="#fff" stroke-width="1" fill="none" opacity=".8"/><path d="M18.300 18.700l6.200 5.500" stroke="#ef8a22" stroke-width="3" stroke-linecap="round"/><path d="M23.800 23.600l.9 .8" stroke="#e4e4e4" stroke-width="3" stroke-linecap="round"/></svg>
<svg style="left:260px;top:57px" width="13" height="10.5" viewBox="0 0 13 10.5"><path d="M1 5l2-2 2.500 2.800L10.500 .8l1.800 1.500-6.800 7.500z" fill="#2a6fd0"/></svg>
<svg style="left:259px;top:79px" width="15" height="12" viewBox="0 0 15 12"><path d="M2 5q3-4 7-2l4 4-2 3-5-1z" fill="#d9d9d9" opacity=".8"/><path d="M5 6l5 3M7 4.500l5 3" stroke="#e8dca0" stroke-width="1.600" opacity=".9"/></svg>
<svg style="left:259px;top:100px" width="15" height="15" viewBox="0 0 15 15"><path d="M2 5q3-4 7-2l4 4-2 3-5-1z" fill="#a8a8a8"/><path d="M5 6l6 3.500M7 4.500l6 3.500" stroke="#e8c83c" stroke-width="1.800"/><path d="M1.500 8.500l5 5M6.500 8.500l-5 5" stroke="#e02828" stroke-width="1.900"/></svg>
<svg style="left:338.5px;top:56px" width="23" height="26" viewBox="0 0 23 26"><path d="M2 2.500v21l19-10.500z" fill="url(#gr)" stroke="#3a9a2a" stroke-width="1.800" stroke-linejoin="round"/></svg>
<svg style="left:375.5px;top:56.5px" width="26" height="25" viewBox="0 0 26 25"><rect x=".800" y=".800" width="24.400" height="23.400" rx="2.500" fill="url(#st)" stroke="#f1aaa2" stroke-width="1"/></svg>
<svg style="left:461.5px;top:55.5px" width="28" height="28" viewBox="0 0 28 28"><path d="M.500 3.500v14q0 3 9.800 3t9.800-3v-14z" fill="url(#cy)"/><ellipse cx="10.300" cy="3.500" rx="9.800" ry="3" fill="#c9c8f0"/><path d="M.500 8q0 3 9.800 3t9.800-3M.500 12.500q0 3 9.800 3t9.800-3" stroke="#c9c8f0" stroke-width=".800" fill="none"/></svg>
<svg style="left:472px;top:66px" width="16.5" height="16.5" viewBox="0 0 25 25"><path d="M1 2.500Q1 1 2.500 1h19.500l2 2v19.500q0 1.500-1.500 1.500H2.500Q1 24 1 22.500z" fill="url(#fl)" stroke="#0b43a0" stroke-width=".800"/><rect x="5" y="1.500" width="14.500" height="11.500" fill="#f2f2f2" stroke="#c8c8c8" stroke-width=".500"/><path d="M7.500 4.500h9.500M7.500 7h9.500M7.500 9.500h9.500" stroke="#b8b8b8" stroke-width="1"/><rect x="6.500" y="16.500" width="12" height="7.500" fill="#e4e4e4"/><rect x="8.500" y="17.500" width="3" height="5.500" fill="#1554b4"/><path d="M13 16.500h5.500v7.500z" fill="#fff" opacity=".7"/></svg>
<svg style="left:623.5px;top:59.5px" width="19.5" height="19.5" viewBox="0 0 19.5 19.5"><rect x=".300" y=".300" width="18.900" height="18.900" rx="1.500" fill="url(#or)" stroke="#c27a24" stroke-width=".600"/><path d="M1.500 14.500l3.500-3 2.500 1.500 3-3.500 2.500 1.500 4.500-5v6l-4 3-3-.5-3 2-2.500-1-3.500 2z" fill="#fff"/></svg>
<svg style="left:659.5px;top:57px" width="28" height="25" viewBox="0 0 28 25"><path d="M2.500 3.500q2.500-3 5.500-.5L22.500 16l-4.500 4.500L3.500 8.500q-2.500-2.500-1-5z" fill="#b4e0b0" stroke="#d0b0b0" stroke-width=".800"/><path d="M22.500 16l3.500 7-7.500-2.500z" fill="#e8c8b8"/><path d="M24 19.500l2 3.800-4-1.300z" fill="#a8a8a8"/><path d="M2.500 3.500q2.500-3 5.500-.5l-4.500 5q-2.500-2.500-1-4.500z" fill="#f0b8b8"/></svg>
<svg style="left:714px;top:59.5px" width="19" height="19.5" viewBox="0 0 19 19.5"><rect x=".300" y=".300" width="18.400" height="18.900" rx="1.500" fill="#dca2a6"/><path d="M7.500 2.500h4v5h3.500l-5.500 5.500L4 7.500h3.500z" fill="#fff"/><rect x="2" y="13.500" width="15" height="4.500" rx="1" fill="#f6e6e6"/><text x="9.500" y="17.500" font-family="Liberation Sans,sans-serif" font-weight="bold" font-size="4.500" fill="#dca2a6" text-anchor="middle">PDF</text></svg>
<svg style="left:758px;top:55px" width="29" height="28" viewBox="0 0 29 28"><path d="M8 12.600L3.300 1.500 13.500 .300 18 9.800z" fill="#d6eafb" stroke="#a6c2de" stroke-width=".600"/><path d="M.500 14.500L9.800 9.800l18 2.800L12.500 19z" fill="#fafafa" stroke="#b0b0b0" stroke-width=".700"/><path d="M.500 14.500l12 4.500v8L.500 22.800z" fill="#e9e9e9" stroke="#a8a8a8" stroke-width=".700"/><path d="M12.500 19l15.300-6.400V20L12.500 27z" fill="#dcdcdc" stroke="#a8a8a8" stroke-width=".700"/><path d="M.500 18.800l12 4.500 15.300-6.500" stroke="#707070" stroke-width="1.600" fill="none"/><circle cx="22.200" cy="14.200" r="1.400" fill="#30b430"/></svg>
<svg style="left:805px;top:59px" width="18" height="18" viewBox="0 0 18 18"><path d="M1 17V2.500q0-1 1-1h5l1.500 2h8q1 0 1 1V17z" fill="url(#fo)" stroke="#d4b250" stroke-width=".800"/></svg>
<svg style="left:813.5px;top:66px" width="16" height="10.5" viewBox="0 0 16 10.5"><rect x=".400" y=".400" width="15.200" height="9.700" rx="1" fill="#e8e8e8" stroke="#8e8e8e" stroke-width=".800"/><rect x="2.5" y="2.0" width="1.800" height="1.500" fill="#555"/><rect x="5.5" y="2.0" width="1.800" height="1.500" fill="#555"/><rect x="8.5" y="2.0" width="1.800" height="1.500" fill="#555"/><rect x="11.5" y="2.0" width="1.800" height="1.500" fill="#555"/><rect x="2.5" y="4.4" width="1.800" height="1.500" fill="#555"/><rect x="5.5" y="4.4" width="1.800" height="1.500" fill="#555"/><rect x="8.5" y="4.4" width="1.800" height="1.500" fill="#555"/><rect x="11.5" y="4.4" width="1.800" height="1.500" fill="#555"/><rect x="2.5" y="6.8" width="1.800" height="1.500" fill="#555"/><rect x="5.5" y="6.8" width="1.800" height="1.500" fill="#555"/><rect x="8.5" y="6.8" width="1.800" height="1.500" fill="#555"/><rect x="11.5" y="6.8" width="1.800" height="1.500" fill="#555"/></svg>
<svg style="left:849.5px;top:59px" width="18" height="18" viewBox="0 0 18 18"><path d="M1 17V2.500q0-1 1-1h5l1.500 2h8q1 0 1 1V17z" fill="url(#fo)" stroke="#d4b250" stroke-width=".800"/></svg>
<svg style="left:858.5px;top:65.5px" width="13" height="12" viewBox="0 0 13 12"><rect x=".500" y=".500" width="11.500" height="7.500" rx=".800" fill="#d4d8dc" stroke="#9a9ea2" stroke-width=".800"/><rect x="5" y="8" width="2.500" height="2" fill="#9a9ea2"/><rect x="3" y="10" width="6.500" height="1.300" fill="#9a9ea2"/></svg>
<svg style="left:895.5px;top:57.5px" width="26.5" height="23" viewBox="0 0 26.5 23"><rect x=".800" y=".800" width="24.9" height="21.4" rx="1.500" fill="url(#wn)" stroke="#46a4ff" stroke-width="1.600"/><rect x="1" y="1" width="24.5" height="3.200" fill="#46a4ff"/></svg>
<svg style="left:908.5px;top:68px" width="14" height="14" viewBox="0 0 14 14"><rect x="1" y="4.500" width="8" height="8" fill="#f8f8f8" stroke="#888" stroke-width=".900"/><path d="M2.500 7.500l3 3.500L13 1" fill="none" stroke="#123c98" stroke-width="2"/></svg>
<svg style="left:932.5px;top:33.5px" width="10" height="7" viewBox="0 0 10 7"><path d="M.800 5.500L5 1l4.200 4.500-1.500 1.200L5 3.800 2.300 6.700z" fill="#f4f0c8" stroke="#555" stroke-width=".700"/></svg>
<svg style="left:949.5px;top:31px" width="13" height="13" viewBox="0 0 13 13"><rect x=".800" y=".800" width="11.400" height="11.400" rx="1" fill="#f0f0ff" stroke="#46a4ff" stroke-width="1.500"/><path d="M3.500 9.500l1-2.500 5.500-5.500 1.500 1.500L6 8.500z" fill="#4ec03c"/><path d="M10 1.500l1-1 1.500 1.500-1 1z" fill="#e03030"/></svg>
<svg style="left:968.5px;top:31px" width="13" height="13" viewBox="0 0 13 13"><path d="M6.500 .8a5.700 4.800 0 1 1-1 9.500l1.500 2.200-3.500-2.800A5.700 4.800 0 0 1 6.500 .8z" fill="#fafaff" stroke="#c8c8dc" stroke-width=".600"/><text x="6.500" y="8.800" font-family="Liberation Serif,serif" font-weight="bold" font-size="8.500" fill="#1c5cc8" text-anchor="middle">i</text></svg>
<svg style="left:987.5px;top:31px" width="13" height="13" viewBox="0 0 13 13"><path d="M1.500 3h7.500l-.8 9h-6z" fill="#c4e0f4" stroke="#86a8c4" stroke-width=".700"/><path d="M.800 2.500l4.500-1.500 4.500 1.500" stroke="#a4c4dc" stroke-width="1.200" fill="none"/><circle cx="8.500" cy="9" r="3.300" fill="#f4f8ff" stroke="#d07030" stroke-width="1"/><path d="M8.500 7v4" stroke="#2a6cd0" stroke-width="1.500"/></svg>
<svg style="left:1008px;top:32px" width="11" height="11" viewBox="0 0 11 11"><circle cx="5.500" cy="5.500" r="5.200" fill="url(#hp)" stroke="#b4c8e4" stroke-width=".600"/><text x="5.500" y="8.800" font-family="Liberation Sans,sans-serif" font-weight="bold" font-size="8.500" fill="#fff" text-anchor="middle">?</text></svg>
<svg style="left:9.5px;top:577px" width="12" height="13" viewBox="0 0 12 13"><circle cx="4.500" cy="4.500" r="3.500" fill="#dfe8f4" stroke="#7a8696" stroke-width="1"/><path d="M4.500 8v4M2.500 12h5" stroke="#7a8696" stroke-width="1"/><circle cx="9.500" cy="3" r="1.200" fill="#888"/></svg>
<svg style="left:11px;top:596px" width="13" height="14" viewBox="0 0 13 14"><circle cx="6" cy="3.500" r="3" fill="#f0a040"/><path d="M.800 13q0-6 5.200-6t5.200 6z" fill="#e87c28"/><path d="M6.500 10.500l2 2.300L12.500 8" fill="none" stroke="#1c4cb0" stroke-width="1.600"/></svg>
<!--ICONS-->
<div style="left:0px;top:0px;width:1px;height:614px;background:#4c4c4c"></div>
<div style="left:1px;top:27px;width:1px;height:586px;background:rgba(80,80,80,.3)"></div>
<div style="left:1022.5px;top:0px;width:1.5px;height:614px;background:#6c6c6c"></div>
<div style="left:1021px;top:27px;width:1px;height:586px;background:rgba(80,80,80,.3)"></div>
<div style="left:0px;top:612.5px;width:1024px;height:1.5px;background:#555"></div>
</div></body></html>
